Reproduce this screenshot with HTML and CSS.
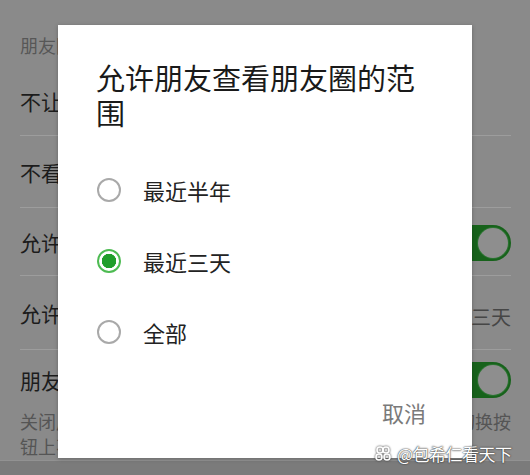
FILE: index.html
```html
<!DOCTYPE html>
<html lang="zh-CN">
<head>
<meta charset="utf-8">
<title>朋友圈</title>
<link rel="stylesheet" href="styles.css">
</head>
<body>
<div class="page">
  <div class="section-title">朋友圈</div>
  <div class="list">
    <div class="row r1"><span>不让他（她）看</span></div>
    <div class="row r2"><span>不看他（她）</span></div>
    <div class="row r3"><span>允许陌生人查看十条朋友圈</span><span class="toggle"><span class="knob"></span></span></div>
    <div class="row r4"><span>允许朋友查看朋友圈的范围</span><span class="value">最近三天</span></div>
    <div class="row r5"><span>朋友圈更新提醒</span><span class="toggle"><span class="knob"></span></span></div>
  </div>
  <div class="desc">
    <div class="desc-line"><span>关闭后，有朋友发表朋友圈时，</span><span>切换按</span></div>
    <div class="desc-line"><span>钮上不再出现红点提示。</span></div>
  </div>
  <div class="bottom-bar"></div>
</div>

<div class="dialog">
  <div class="dialog-title">允许朋友查看朋友圈的范围</div>
  <div class="options">
    <div class="option"><span class="radio"></span><span class="label">最近半年</span></div>
    <div class="option"><span class="radio checked"></span><span class="label">最近三天</span></div>
    <div class="option"><span class="radio"></span><span class="label">全部</span></div>
  </div>
  <div class="actions"><span class="cancel">取消</span></div>
</div>

<div class="watermark">
  <svg class="wm-logo" width="18" height="18" viewBox="0 0 18 18">
    <g fill="none" stroke="#fff" stroke-width="1.6">
      <circle cx="6" cy="5" r="3"/>
      <circle cx="12" cy="5" r="3"/>
      <circle cx="5" cy="12" r="3"/>
      <circle cx="13" cy="12" r="3"/>
    </g>
  </svg>
  <span class="wm-text">@包希仁看天下</span>
</div>
</body>
</html>
```

FILE: styles.css
```css
html, body {
  margin: 0;
  padding: 0;
}
body {
  width: 530px;
  height: 475px;
  overflow: hidden;
  background: #8a8a8a;
  font-family: "Noto Sans CJK SC", "Noto Sans", sans-serif;
  position: relative;
}
.page {
  width: 530px;
}
.section-title {
  height: 67px;
  box-sizing: border-box;
  padding: 33px 0 0 20px;
  line-height: 24px;
  font-size: 18px;
  color: #575757;
}
.list {
  margin: 0 19px 0 20px;
}
.row {
  display: flex;
  align-items: center;
  justify-content: space-between;
  border-bottom: 1px solid #9d9d9d;
  font-size: 21px;
  color: #1c1c1c;
  white-space: nowrap;
}
.r1 { height: 68px; }
.r2 { height: 71px; }
.r3 { height: 67px; }
.r4 { height: 73px; }
.r5 { height: 59px; border-bottom: none; }
.r4 .value {
  font-size: 20px;
  color: #464646;
  padding-top: 8px;
}
.toggle {
  width: 64px;
  height: 36px;
  border-radius: 18px;
  background: #17621b;
  display: flex;
  justify-content: flex-end;
}
.knob {
  width: 30px;
  height: 30px;
  margin: 3px;
  border-radius: 50%;
  background: #8e8e8e;
  box-shadow: 0 0 0 1px #2a7330;
}
.r3 .toggle { margin-top: 2px; }
.desc {
  margin: 0 19px 0 20px;
  font-size: 18px;
  line-height: 25px;
  color: #555;
}
.desc-line {
  display: flex;
  justify-content: space-between;
  white-space: nowrap;
}
.bottom-bar {
  height: 20px;
  margin-top: 1px;
  background: #7b7b7b;
  border-top: 1px solid #929292;
}
.dialog {
  position: absolute;
  left: 58px;
  top: 25px;
  width: 414px;
  height: 433px;
  box-sizing: border-box;
  padding: 35px 46px 0 38px;
  background: #fff;
  box-shadow: 0 1px 4px rgba(0,0,0,0.25);
}
.dialog-title {
  font-size: 29px;
  line-height: 35px;
  color: #1a1a1a;
}
.options {
  margin-top: 24px;
}
.option {
  height: 71px;
  display: flex;
  align-items: center;
}
.radio {
  width: 24px;
  height: 24px;
  box-sizing: border-box;
  margin-left: 1px;
  border-radius: 50%;
  border: 2px solid #a9a9a9;
  flex: none;
}
.radio.checked {
  border: 2px solid #4dbb52;
  background: radial-gradient(circle, #1f9e2a 0 7px, #fff 7.5px);
}
.label {
  margin-left: 22px;
  font-size: 22px;
  color: #222;
}
.actions {
  margin-top: 30px;
  display: flex;
  justify-content: flex-end;
}
.cancel {
  font-size: 22px;
  line-height: 30px;
  color: #7a7a7a;
}
.watermark {
  position: absolute;
  left: 374px;
  top: 443px;
  display: flex;
  align-items: center;
  gap: 5px;
}
.wm-text {
  font-size: 17px;
  line-height: 22px;
  color: #fff;
  text-shadow: 0 0 2px #333, 0 0 1px #333;
  letter-spacing: -0.5px;
}
.wm-logo {
  filter: drop-shadow(0 0 1px #333);
}
```
